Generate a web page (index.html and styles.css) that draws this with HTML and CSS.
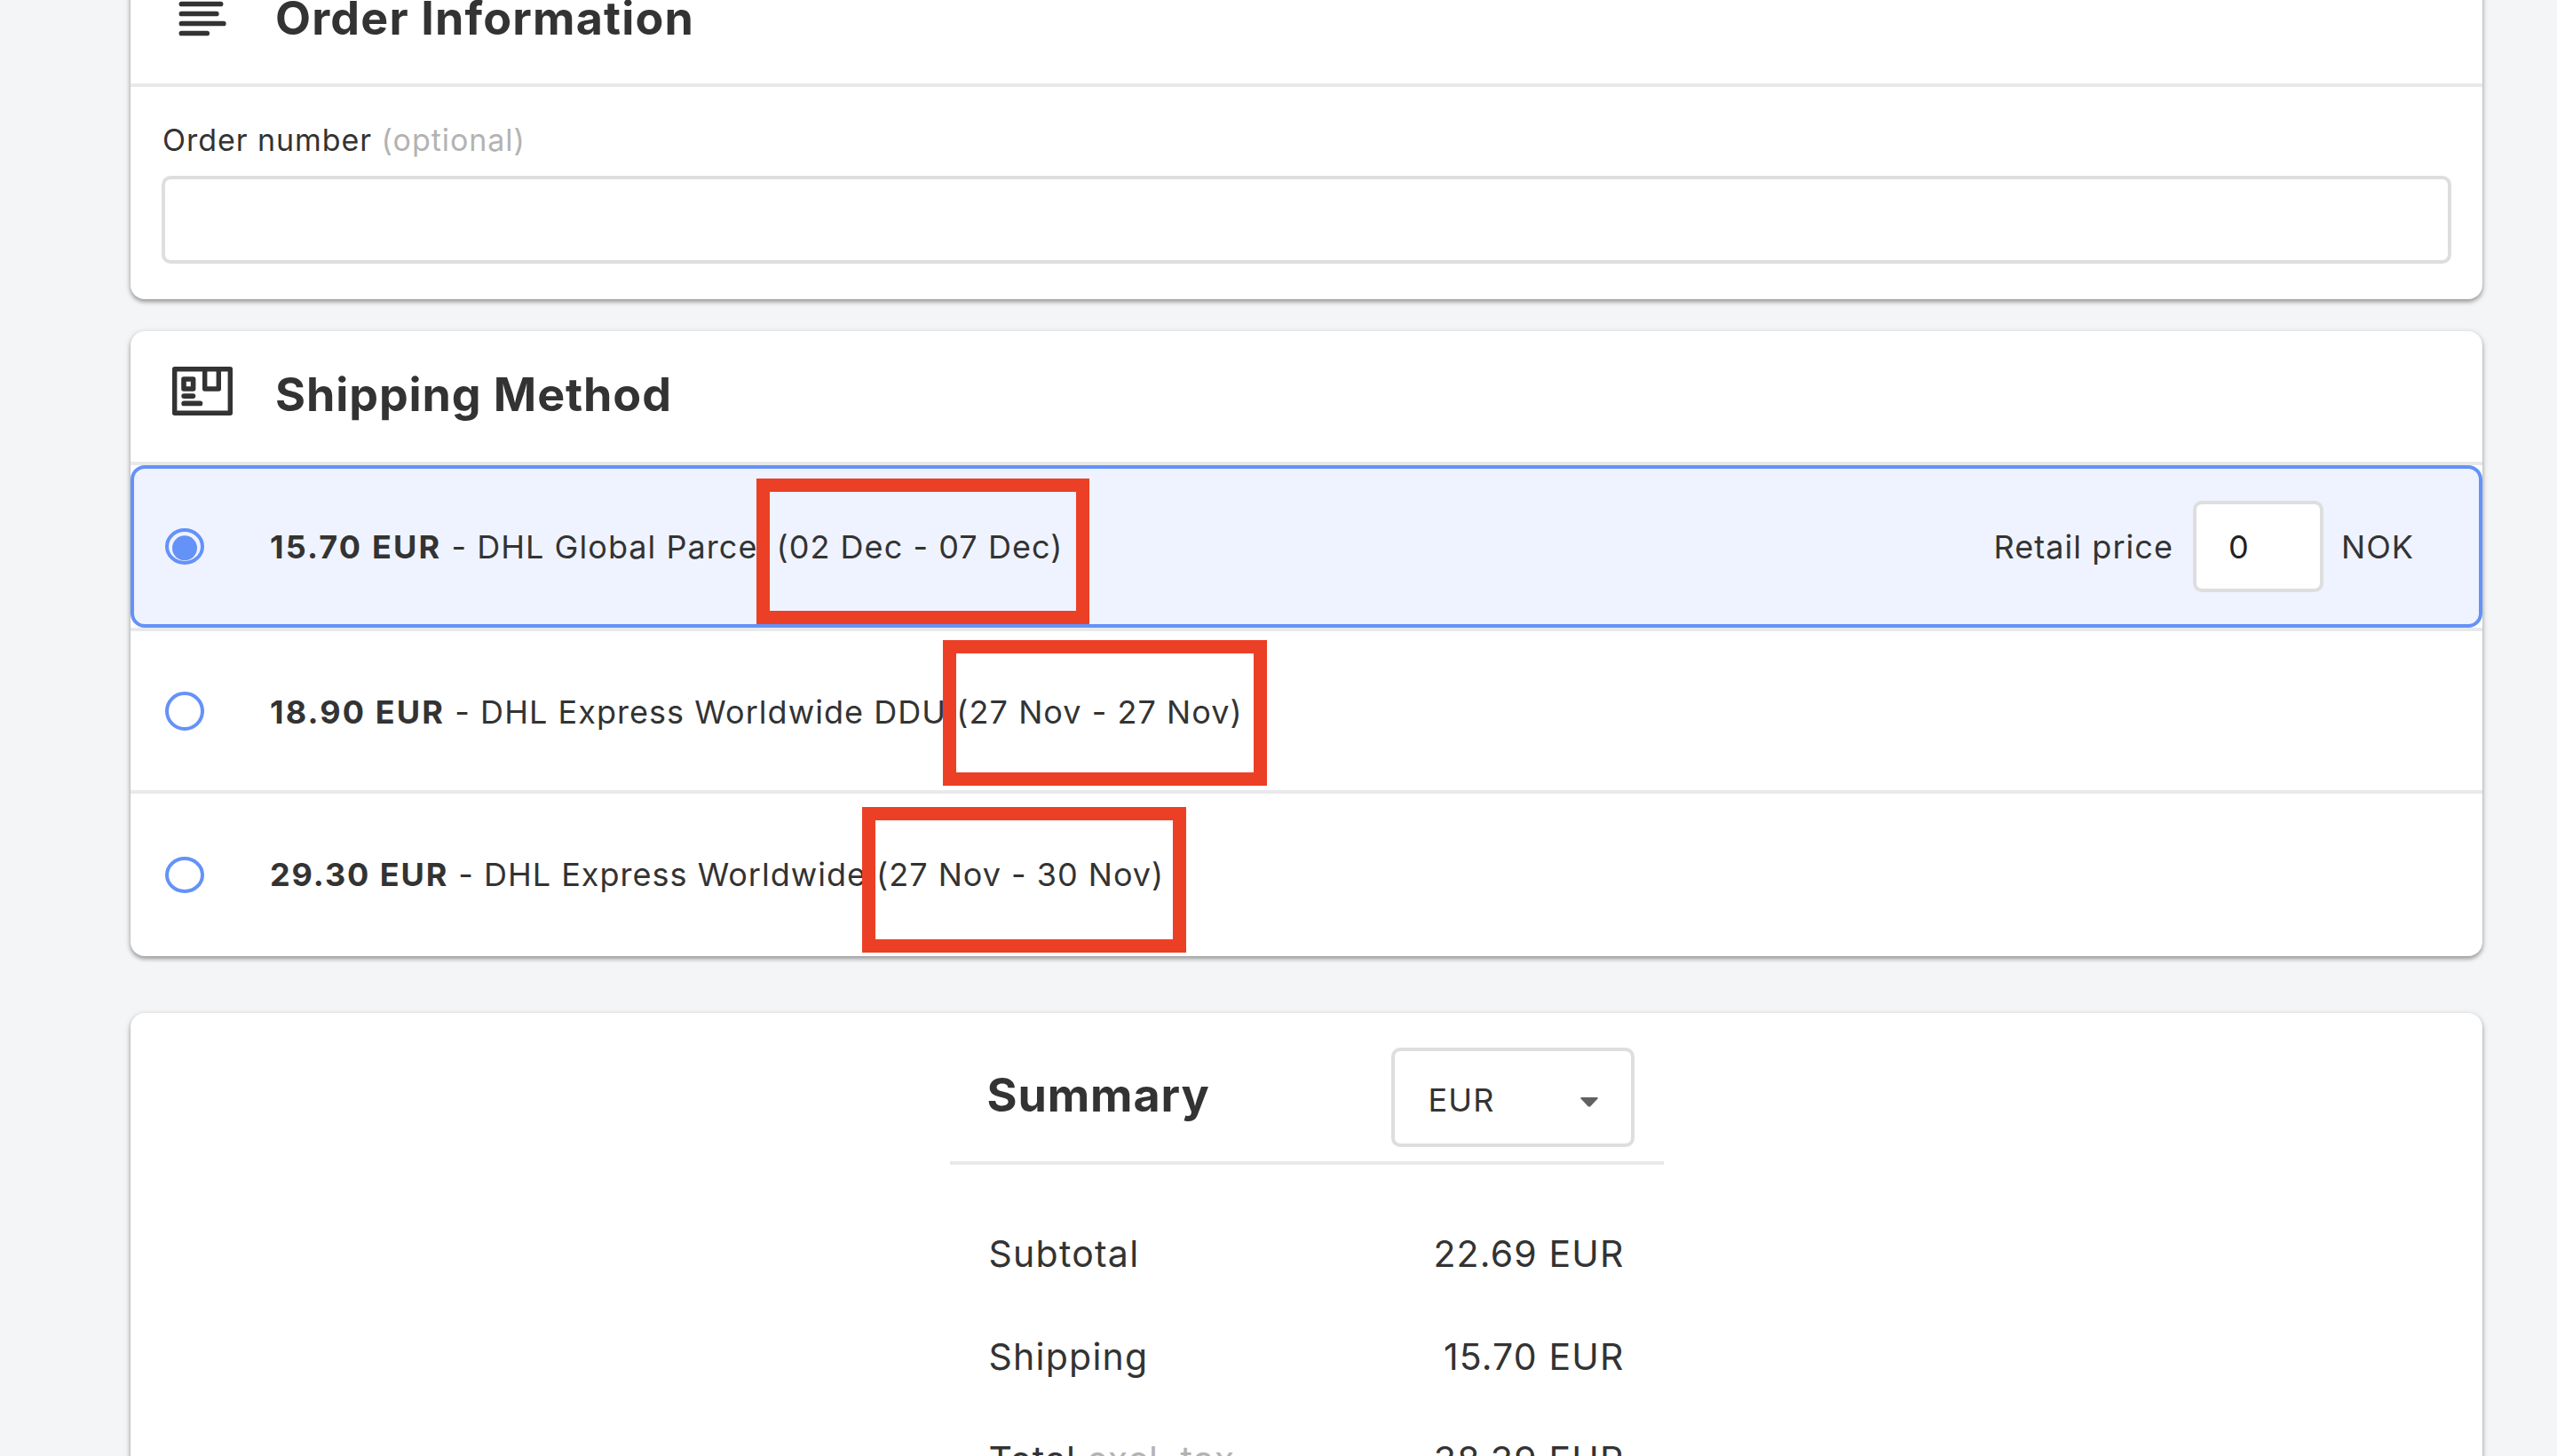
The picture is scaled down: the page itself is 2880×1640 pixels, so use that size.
FILE: index.html
```html
<!DOCTYPE html>
<html lang="en">
<head>
<meta charset="utf-8">
<title>Order</title>
<link rel="stylesheet" href="styles.css">
</head>
<body>
<main class="page">
  <section class="card card-order">
    <header class="card-header">
      <svg class="icon" width="68" height="60" viewBox="0 0 68 60" fill="none" stroke="#333" stroke-width="5.7" stroke-linecap="round">
        <path d="M10.4 10.5H54.6M10.4 21.5H49.8M10.4 32.5H57.8M10.4 43.5H39.2"/>
      </svg>
      <h2 class="card-title">Order Information</h2>
    </header>
    <div class="order-body">
      <label class="field-label" for="order-number">Order number <span class="muted">(optional)</span></label>
      <input class="text-input" id="order-number" type="text">
    </div>
  </section>

  <section class="card card-shipping">
    <header class="card-header">
      <svg class="icon" width="68" height="60" viewBox="0 0 68 60" fill="none" stroke="#333" stroke-width="5.4" stroke-linejoin="round" stroke-linecap="round">
        <path d="M2.7 5.7H65.3V55.3H2.7Z"/>
        <path d="M36.7 5.7V28H52.3V5.7"/>
        <path d="M13 17H23.6V28H13Z" stroke-width="5.6"/>
        <path d="M13.2 36.1H23.4M13.2 44.4H31.4" stroke-width="5.8"/>
      </svg>
      <h2 class="card-title">Shipping Method</h2>
    </header>
    <ul class="methods">
      <li class="method method-selected">
        <svg class="radio" width="44" height="41" viewBox="0 0 44 41">
          <ellipse cx="22" cy="20.5" rx="20" ry="18.5" fill="none" stroke="#6492f7" stroke-width="4"/>
          <circle cx="22" cy="22.3" r="14" fill="#6492f7"/>
        </svg>
        <p class="method-text"><b>15.70 EUR</b> - DHL Global Parcel <span class="dates">(02 Dec - 07 Dec)</span></p>
        <div class="retail">
          <span class="retail-label">Retail price</span>
          <input class="retail-input" type="text" value="0" aria-label="Retail price">
          <span class="retail-currency">NOK</span>
        </div>
      </li>
      <li class="method method-second">
        <svg class="radio" width="44" height="44" viewBox="0 0 44 44">
          <circle cx="22" cy="22" r="20" fill="#fff" stroke="#6492f7" stroke-width="4"/>
        </svg>
        <p class="method-text"><b>18.90 EUR</b> - DHL Express Worldwide DDU <span class="dates">(27 Nov - 27 Nov)</span></p>
      </li>
      <li class="method method-third">
        <svg class="radio" width="44" height="41" viewBox="0 0 44 41">
          <ellipse cx="22" cy="20.5" rx="20" ry="18.5" fill="#fff" stroke="#6492f7" stroke-width="4"/>
        </svg>
        <p class="method-text"><b>29.30 EUR</b> - DHL Express Worldwide <span class="dates">(27 Nov - 30 Nov)</span></p>
      </li>
    </ul>
  </section>

  <section class="card card-summary">
    <div class="summary">
      <header class="summary-header">
        <h2 class="card-title">Summary</h2>
        <div class="select"><span>EUR</span>
          <svg class="caret" width="20" height="11" viewBox="0 0 20 11"><path d="M1 0H19L20 1L11 10.5H9L0 1Z" fill="#616161"/></svg>
        </div>
      </header>
      <div class="summary-row"><span>Subtotal</span><span class="amount">22.69 EUR</span></div>
      <div class="summary-row"><span>Shipping</span><span class="amount">15.70 EUR</span></div>
      <div class="summary-row summary-total"><span>Total <span class="muted">excl. tax</span></span><span class="amount">38.39 EUR</span></div>
    </div>
  </section>

  <div class="mark mark-first"></div>
  <div class="mark mark-second"></div>
  <div class="mark mark-third"></div>
</main>
</body>
</html>
```
FILE: styles.css
```css
* { box-sizing: border-box; }

body {
  margin: 0;
  background: #f4f5f7;
  color: #333;
  font-family: Inter, "Liberation Sans", sans-serif;
}

.page {
  position: relative;
  height: 1640px;
  overflow: hidden;
  padding: 0 84px 0 147px;
  display: flex;
  flex-direction: column;
}

.card {
  flex: none;
  background: #fff;
  border-radius: 16px;
  box-shadow: 0 2px 7px rgba(0, 0, 0, .22), 0 3px 4px rgba(0, 0, 0, .24);
}

.card-order { height: 390px; margin-top: -53px; }
.card-shipping { height: 704px; margin-top: 36px; }
.card-summary { height: 640px; margin-top: 64px; }

.card-header {
  height: 151px;
  border-bottom: 4px solid #e7e9eb;
  display: flex;
  align-items: center;
  gap: 48px;
  padding: 0 47px 3px;
}

.icon { flex: none; margin-bottom: 10px; }
.card-order .card-header { padding-bottom: 0; }
.card-order .icon { margin-bottom: -6px; }

.card-title {
  margin: 0;
  font-size: 52px;
  line-height: 64px;
  font-weight: 700;
  letter-spacing: .9px;
}

.card-order .card-title { letter-spacing: 1.17px; }

.order-body { padding: 38px 35px 0; }

.field-label {
  display: block;
  padding-left: 1px;
  font-size: 34px;
  line-height: 44px;
  letter-spacing: .95px;
}

.muted { color: #b3b3b3; }

.text-input {
  display: block;
  width: 100%;
  height: 99px;
  margin-top: 18px;
  border: 4px solid #dedede;
  border-radius: 10px;
  background: #fff;
}

.methods { list-style: none; margin: 0; padding: 0; }

.method {
  height: 183px;
  padding: 0 39px;
  display: flex;
  align-items: center;
  font-size: 36px;
  line-height: 44px;
  letter-spacing: 1.05px;
}

.method-selected {
  background: #eff3ff;
  border: 4px solid #6492f7;
  border-radius: 16px;
  padding: 0 73px 0 35px;
}

.method-second {
  height: 187px;
  border-top: 4px solid #e7e9eb;
  border-bottom: 4px solid #e7e9eb;
}

.method-second .method-text { padding-top: 3px; }
.method-third { padding-bottom: 1px; letter-spacing: 1px; }

.radio { flex: none; margin-right: 74px; }
.method-text { margin: 0; flex: 1; white-space: pre; }
.method-text b { font-weight: 700; letter-spacing: 2.15px; }
.method-third b { letter-spacing: 1.9px; }

.retail { display: flex; align-items: center; }

.retail-input {
  width: 147px;
  height: 103px;
  margin: 0 20px 0 22px;
  padding: 0 36px;
  border: 4px solid #dedede;
  border-radius: 10px;
  background: #fff;
  color: #222;
  font: inherit;
}

.summary { width: 804px; margin: 0 auto; }

.summary-header {
  height: 171px;
  padding: 39px 33px 0 42px;
  border-bottom: 4px solid #e7e9eb;
  display: flex;
  justify-content: space-between;
  align-items: flex-start;
  margin-bottom: 42px;
}

.summary-header .card-title { margin-top: 22px; }

.select {
  width: 274px;
  height: 112px;
  padding: 5px 37px 0 38px;
  border: 4px solid #dedede;
  border-radius: 10px;
  display: flex;
  align-items: center;
  justify-content: space-between;
  font-size: 36px;
  letter-spacing: 1.2px;
}

.caret { margin-top: 5px; }

.summary-row {
  height: 116px;
  padding: 0 44px;
  display: flex;
  align-items: center;
  justify-content: space-between;
  font-size: 41px;
  letter-spacing: 1.25px;
}

.summary-total { letter-spacing: .75px; }
.amount { letter-spacing: 1.15px; }

/* Highlight frames lie over the delivery dates */
.mark {
  position: absolute;
  height: 164px;
  border: 15px solid #eb4026;
}

.mark-first { left: 852px; top: 539px; width: 375px; }
.mark-second { left: 1062px; top: 721px; width: 365px; }
.mark-third { left: 971px; top: 909px; width: 365px; }
```
